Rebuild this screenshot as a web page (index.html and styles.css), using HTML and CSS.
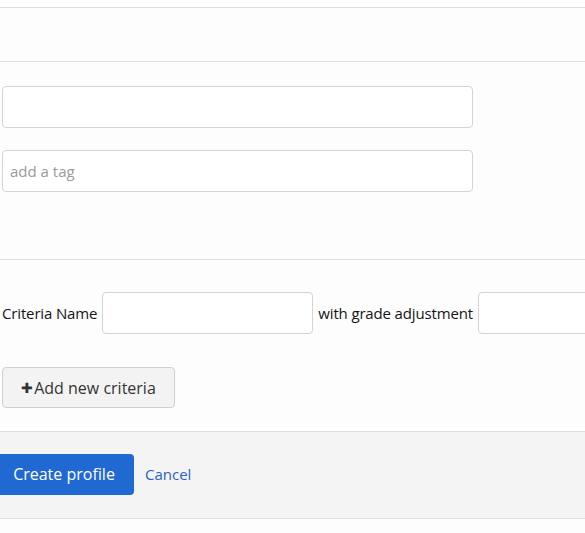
FILE: index.html
```html
<!DOCTYPE html>
<html>
<head>
<meta charset="utf-8">
<link rel="stylesheet" href="styles.css">
</head>
<body>
<div class="page">
  <div class="band"></div>
  <div class="section-empty"></div>
  <div class="section-fields">
    <input class="text-input wide" type="text">
    <input class="text-input wide" type="text" placeholder="add a tag">
  </div>
  <div class="section-criteria">
    <div class="criteria-row">
      <label class="label">Criteria Name</label>
      <input class="text-input narrow" type="text">
      <label class="label">with grade adjustment</label>
      <input class="text-input narrow" type="text">
    </div>
    <button class="btn-neutral" type="button"><span class="plus">&#10010;</span>Add new criteria</button>
  </div>
  <div class="footer">
    <button class="btn-brand" type="button">Create profile</button>
    <a class="link" href="#">Cancel</a>
  </div>
</div>
</body>
</html>
```
FILE: styles.css
```css
html, body {
  margin: 0;
  padding: 0;
  background: #fdfdfd;
  overflow: hidden;
}
body {
  font-family: "Open Sans", "Liberation Sans", sans-serif;
  color: #1a1a1a;
  width: 585px;
  height: 533px;
}
.page {
  display: flex;
  flex-direction: column;
}
.band {
  height: 7px;
}
.section-empty {
  height: 53px;
  border-top: 1px solid #dedede;
  border-bottom: 1px solid #dedede;
}
.section-fields {
  display: flex;
  flex-direction: column;
  gap: 22px;
  padding: 24px 0 67px 2px;
  border-bottom: 1px solid #dedede;
}
.text-input {
  box-sizing: border-box;
  height: 42px;
  border: 1px solid #d4d4d4;
  border-radius: 4px;
  background: #fff;
  font-family: inherit;
  font-size: 15px;
  padding: 0 7px;
  outline: none;
  margin: 0;
}
.text-input::placeholder {
  color: #9a9a9a;
}
.wide {
  width: 471px;
}
.narrow {
  width: 211px;
  flex: none;
}
.section-criteria {
  display: flex;
  flex-direction: column;
  align-items: flex-start;
  gap: 33px;
  padding: 32px 0 23px 2px;
}
.criteria-row {
  display: flex;
  align-items: center;
  gap: 5px;
  white-space: nowrap;
}
.label {
  font-size: 15px;
  letter-spacing: -0.15px;
  color: #151515;
}
.btn-neutral {
  box-sizing: border-box;
  height: 41px;
  width: 173px;
  border: 1px solid #d0d0d0;
  border-radius: 4px;
  background: #f3f3f3;
  font-family: inherit;
  font-size: 16px;
  color: #333;
  padding: 0;
  display: flex;
  align-items: center;
  justify-content: center;
  cursor: pointer;
}
.plus {
  font-size: 14px;
  margin-right: 1px;
}
.footer {
  display: flex;
  align-items: center;
  gap: 11px;
  height: 86px;
  background: #f4f4f4;
  border-top: 1px solid #dedede;
  border-bottom: 1px solid #dedede;
}
.btn-brand {
  box-sizing: border-box;
  height: 41px;
  width: 140px;
  margin-left: -6px;
  margin-top: -2px;
  border: none;
  border-radius: 4px;
  background: #2069d3;
  color: #fff;
  font-family: inherit;
  font-size: 16px;
  padding: 0;
  cursor: pointer;
}
.link {
  color: #2a63c2;
  font-size: 15px;
  text-decoration: none;
  margin-top: -3px;
}
```
